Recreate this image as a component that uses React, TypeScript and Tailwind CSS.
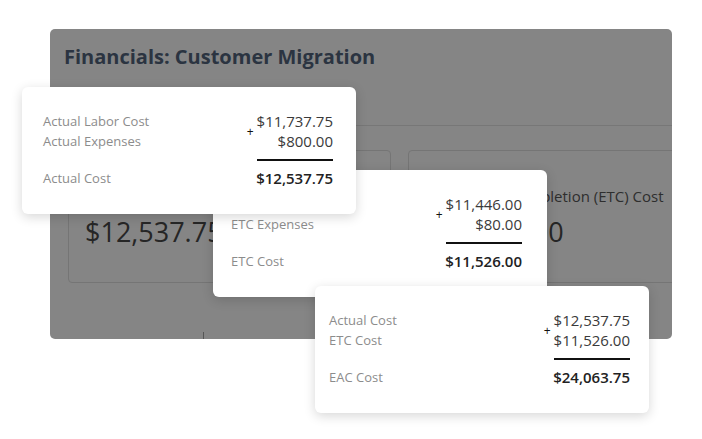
import React from "react";

type Popup = {
  rows: [string, string][];
  totalLabel: string;
  totalValue: string;
  cls: string;
};

function CostPopup({ rows, totalLabel, totalValue, cls }: Popup) {
  return (
    <div
      className={`absolute w-[334px] h-[127px] bg-white rounded-[6px] shadow-[0_3px_12px_rgba(0,0,0,0.16)] pt-[24px] ${cls}`}
    >
      <div className="flex justify-between">
        <div className="flex flex-col text-[13px] text-[#8c8c8c]">
          <div className="h-[20px] leading-[20px]">{rows[0][0]}</div>
          <div className="h-[20px] leading-[20px]">{rows[1][0]}</div>
          <div className="h-[20px] leading-[20px] mt-[17px]">{totalLabel}</div>
        </div>
        <div className="flex flex-col items-end">
          <div className="flex">
            <span className="self-start mt-[15px] h-[12px] leading-[12px] text-[12px] text-[#111] mr-[3px]">+</span>
            <div className="border-b-2 border-[#111] pb-[8px] text-right text-[15px] text-[#3a3a3a]">
              <div className="h-[20px] leading-[20px]">{rows[0][1]}</div>
              <div className="h-[20px] leading-[20px]">{rows[1][1]}</div>
            </div>
          </div>
          <div className="mt-[7px] h-[20px] leading-[20px] text-[15px] font-semibold text-[#222]">{totalValue}</div>
        </div>
      </div>
    </div>
  );
}

export default function App() {
  return (
    <div
      className="relative w-[702px] h-[439px] overflow-hidden bg-white pl-[50px] pt-[29px]"
      style={{ fontFamily: '"Open Sans", "Liberation Sans", sans-serif' }}
    >
      <div className="w-[622px] h-[310px] bg-[#858585] rounded-[5px] overflow-hidden flex flex-col">
        <div className="shrink-0 pl-[14px] pt-[15px] h-[96px] text-[20px] leading-[26px] font-bold text-[#2b3441]">
          Financials: Customer Migration
        </div>
        <div className="shrink-0 border-t border-[#777777]" />
        <div className="shrink-0 flex gap-[17px] pl-[18px] pt-[24px]">
          <div className="w-[323px] shrink-0 h-[133px] border border-[#757575] rounded-[4px] pl-[16px] pt-[35px]">
            <div className="text-[15px] leading-[20px] text-[#2e2e2e]">Actual Cost</div>
            <div className="mt-[8px] text-[27px] leading-[36px] text-[#262626]">$12,537.75</div>
          </div>
          <div className="w-[300px] shrink-0 h-[133px] border border-[#757575] rounded-[4px] pl-[17px] pt-[35px]">
            <div className="text-[15px] leading-[20px] text-[#2e2e2e] whitespace-nowrap">
              Estimate to Completion (ETC) Cost
            </div>
            <div className="mt-[8px] text-[27px] leading-[36px] text-[#262626]">$11,526.00</div>
          </div>
        </div>
        <div className="shrink-0 ml-[153px] mt-[49px] h-[10px] border-l border-[#555]" />
      </div>

      <CostPopup
        cls="left-[213px] top-[170px] z-10 pl-[18px] pr-[25px]"
        rows={[
          ["ETC Labor Cost", "$11,446.00"],
          ["ETC Expenses", "$80.00"],
        ]}
        totalLabel="ETC Cost"
        totalValue="$11,526.00"
      />
      <CostPopup
        cls="left-[22px] top-[87px] z-20 pl-[21px] pr-[23px]"
        rows={[
          ["Actual Labor Cost", "$11,737.75"],
          ["Actual Expenses", "$800.00"],
        ]}
        totalLabel="Actual Cost"
        totalValue="$12,537.75"
      />
      <CostPopup
        cls="left-[315px] top-[286px] z-20 pl-[14px] pr-[19px]"
        rows={[
          ["Actual Cost", "$12,537.75"],
          ["ETC Cost", "$11,526.00"],
        ]}
        totalLabel="EAC Cost"
        totalValue="$24,063.75"
      />
    </div>
  );
}
